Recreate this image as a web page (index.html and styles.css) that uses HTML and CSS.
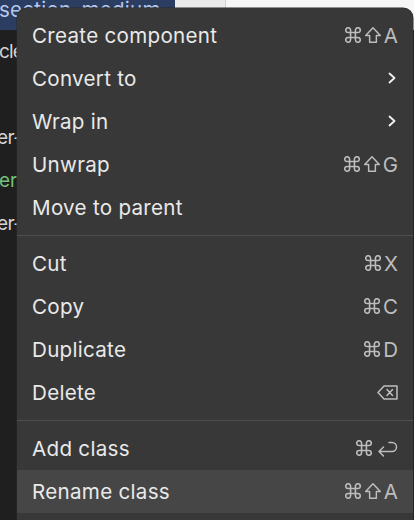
FILE: index.html
```html
<!DOCTYPE html>
<html>
<head>
<meta charset="utf-8">
<link rel="stylesheet" href="styles.css">
</head>
<body>
<div class="app">
  <div class="topbar">
    <div class="sel">section_medium</div>
    <div class="tab"></div>
    <div class="canvas"></div>
  </div>
  <div class="main">
    <div class="tree">
      <div class="row tight">cle</div>
      <div class="row"></div>
      <div class="row cut">er-</div>
      <div class="row green">er</div>
      <div class="row cut">er-</div>
    </div>
  </div>
</div>

<div class="menu">
  <div class="item"><span class="label">Create component</span><span class="keys"><svg class="cmd" viewBox="1.4 1.4 13.2 13.2"><path d="M6 6V4a2 2 0 1 0-2 2h2zm0 0h4m-4 0v4m4-4V4a2 2 0 1 1 2 2h-2zm0 0v4m0 0h2a2 2 0 1 1-2 2v-2zm0 0H6m0 0v2a2 2 0 1 1-2-2h2z"/></svg><svg class="shift" viewBox="0 0 16 16"><path d="M8 1.5 L14.5 8.5 H11 V14.5 H5 V8.5 H1.5 Z"/></svg><span>A</span></span></div>
  <div class="item"><span class="label">Convert to</span><svg class="chev" viewBox="0 0 8 12"><path d="M1.5 1.5 L6.5 6 L1.5 10.5"/></svg></div>
  <div class="item"><span class="label">Wrap in</span><svg class="chev" viewBox="0 0 8 12"><path d="M1.5 1.5 L6.5 6 L1.5 10.5"/></svg></div>
  <div class="item"><span class="label">Unwrap</span><span class="keys"><svg class="cmd" viewBox="1.4 1.4 13.2 13.2"><path d="M6 6V4a2 2 0 1 0-2 2h2zm0 0h4m-4 0v4m4-4V4a2 2 0 1 1 2 2h-2zm0 0v4m0 0h2a2 2 0 1 1-2 2v-2zm0 0H6m0 0v2a2 2 0 1 1-2-2h2z"/></svg><svg class="shift" viewBox="0 0 16 16"><path d="M8 1.5 L14.5 8.5 H11 V14.5 H5 V8.5 H1.5 Z"/></svg><span>G</span></span></div>
  <div class="item"><span class="label">Move to parent</span></div>
  <div class="sep"></div>
  <div class="item"><span class="label">Cut</span><span class="keys"><svg class="cmd" viewBox="1.4 1.4 13.2 13.2"><path d="M6 6V4a2 2 0 1 0-2 2h2zm0 0h4m-4 0v4m4-4V4a2 2 0 1 1 2 2h-2zm0 0v4m0 0h2a2 2 0 1 1-2 2v-2zm0 0H6m0 0v2a2 2 0 1 1-2-2h2z"/></svg><span>X</span></span></div>
  <div class="item"><span class="label">Copy</span><span class="keys"><svg class="cmd" viewBox="1.4 1.4 13.2 13.2"><path d="M6 6V4a2 2 0 1 0-2 2h2zm0 0h4m-4 0v4m4-4V4a2 2 0 1 1 2 2h-2zm0 0v4m0 0h2a2 2 0 1 1-2 2v-2zm0 0H6m0 0v2a2 2 0 1 1-2-2h2z"/></svg><span>C</span></span></div>
  <div class="item"><span class="label">Duplicate</span><span class="keys"><svg class="cmd" viewBox="1.4 1.4 13.2 13.2"><path d="M6 6V4a2 2 0 1 0-2 2h2zm0 0h4m-4 0v4m4-4V4a2 2 0 1 1 2 2h-2zm0 0v4m0 0h2a2 2 0 1 1-2 2v-2zm0 0H6m0 0v2a2 2 0 1 1-2-2h2z"/></svg><span>D</span></span></div>
  <div class="item"><span class="label">Delete</span><span class="keys"><svg class="del" viewBox="0 0 21 15"><path d="M7 1 H20 V14 H7 L1 7.5 Z M10 4.5 L15.5 10.5 M15.5 4.5 L10 10.5"/></svg></span></div>
  <div class="sep"></div>
  <div class="item"><span class="label">Add class</span><span class="keys"><svg class="cmd" viewBox="1.4 1.4 13.2 13.2"><path d="M6 6V4a2 2 0 1 0-2 2h2zm0 0h4m-4 0v4m4-4V4a2 2 0 1 1 2 2h-2zm0 0v4m0 0h2a2 2 0 1 1-2 2v-2zm0 0H6m0 0v2a2 2 0 1 1-2-2h2z"/></svg><svg class="ret" viewBox="0 0 21 17"><path d="M2 11.5 H15 A4.5 4.5 0 0 0 15 2.5 H12 M6.5 7 L2 11.5 L6.5 16"/></svg></span></div>
  <div class="item active"><span class="label">Rename class</span><span class="keys"><svg class="cmd" viewBox="1.4 1.4 13.2 13.2"><path d="M6 6V4a2 2 0 1 0-2 2h2zm0 0h4m-4 0v4m4-4V4a2 2 0 1 1 2 2h-2zm0 0v4m0 0h2a2 2 0 1 1-2 2v-2zm0 0H6m0 0v2a2 2 0 1 1-2-2h2z"/></svg><svg class="shift" viewBox="0 0 16 16"><path d="M8 1.5 L14.5 8.5 H11 V14.5 H5 V8.5 H1.5 Z"/></svg><span>A</span></span></div>
</div>
</body>
</html>
```

FILE: styles.css
```css
* { box-sizing: border-box; }
html, body {
  margin: 0;
  padding: 0;
  width: 414px;
  height: 520px;
  overflow: hidden;
  background: #1f1f1f;
  font-family: Inter, "Noto Sans", sans-serif;
}
.app {
  display: flex;
  flex-direction: column;
  height: 520px;
}
.topbar {
  display: flex;
  height: 30px;
}
.sel {
  width: 175px;
  background: #2b3d60;
  color: #b7c8ea;
  font-size: 20.5px;
  line-height: 20px;
  text-indent: -1px;
  letter-spacing: 0.25px;
  white-space: nowrap;
  overflow: hidden;
}
.tab {
  width: 51px;
  background: #ebebeb;
  border-right: 1px solid #d2d2d2;
}
.canvas {
  flex: 1;
  background: #f7f7f7;
}
.main {
  flex: 1;
  display: flex;
}
.tree {
  width: 175px;
  background: #1f1f1f;
}
.row {
  height: 43px;
  line-height: 43px;
  font-size: 19px;
  color: #d4d4d4;
  white-space: nowrap;
  text-indent: -2px;
}
.row.tight { letter-spacing: -0.8px; text-indent: -1px; }
.row.cut { text-indent: -3px; letter-spacing: -0.6px; }
.row.green { color: #74c27a; text-indent: -1px; }

.menu {
  position: absolute;
  left: 17px;
  top: 8px;
  width: 396px;
  height: 530px;
  background: #383838;
  border-radius: 10px 10px 0 0;
  padding-top: 6px;
  box-shadow: 0 0 0 0.5px #2a2a2a;
}
.item {
  height: 43px;
  display: flex;
  align-items: center;
  justify-content: space-between;
  padding: 0 15px 1px 15px;
  font-size: 20.6px;
  letter-spacing: 0.28px;
  color: #e9e9e9;
}
.item.active { background: #464646; }
.keys {
  display: flex;
  align-items: center;
  color: #bdbdbd;
  font-size: 20.5px;
  letter-spacing: 0;
}
.keys svg {
  fill: none;
  stroke: #bdbdbd;
  stroke-width: 1.3;
  stroke-linejoin: round;
  stroke-linecap: round;
}
.cmd { width: 16px; height: 16px; margin-right: 3px; }
.shift { width: 18px; height: 18px; margin-right: 2px; }
.del { width: 21px; height: 15px; stroke-width: 1.5 !important; }
.ret { width: 21px; height: 17px; margin-left: 2px; stroke-width: 1.5 !important; }
.chev {
  width: 8px;
  height: 12px;
  margin-right: 2px;
  fill: none;
  stroke: #f2f2f2;
  stroke-width: 1.8;
  stroke-linecap: round;
  stroke-linejoin: round;
}
.sep {
  height: 1px;
  margin: 6px 0;
  background: #4e4e4e;
}
```
